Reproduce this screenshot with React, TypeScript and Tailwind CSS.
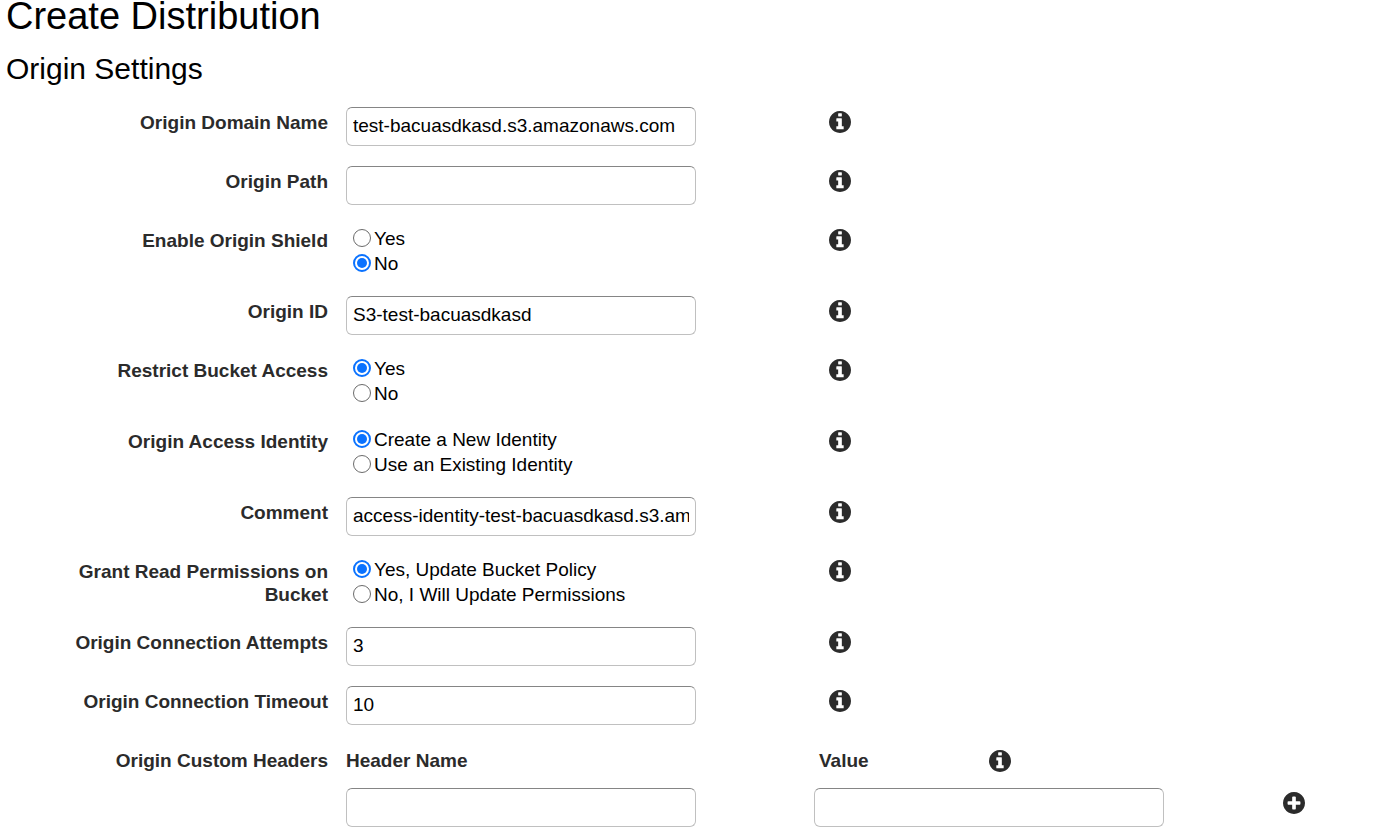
import { useId } from "react";
import type { ReactNode } from "react";

type TextField = { kind: "text"; label: string; value: string };
type RadioField = { kind: "radio"; label: string; options: string[]; selected: number };
type Field = TextField | RadioField;

const fields: Field[] = [
  { kind: "text", label: "Origin Domain Name", value: "test-bacuasdkasd.s3.amazonaws.com" },
  { kind: "text", label: "Origin Path", value: "" },
  { kind: "radio", label: "Enable Origin Shield", options: ["Yes", "No"], selected: 1 },
  { kind: "text", label: "Origin ID", value: "S3-test-bacuasdkasd" },
  { kind: "radio", label: "Restrict Bucket Access", options: ["Yes", "No"], selected: 0 },
  {
    kind: "radio",
    label: "Origin Access Identity",
    options: ["Create a New Identity", "Use an Existing Identity"],
    selected: 0,
  },
  { kind: "text", label: "Comment", value: "access-identity-test-bacuasdkasd.s3.amazonaws.com" },
  {
    kind: "radio",
    label: "Grant Read Permissions on Bucket",
    options: ["Yes, Update Bucket Policy", "No, I Will Update Permissions"],
    selected: 0,
  },
  { kind: "text", label: "Origin Connection Attempts", value: "3" },
  { kind: "text", label: "Origin Connection Timeout", value: "10" },
];

const inputClass =
  "block h-[39px] w-[350px] max-w-full rounded-md border border-[#c0c0c0] border-t-[#858585] bg-white px-[6px] pb-[2px] text-[19px] text-black outline-none focus:border-[#0a72ff]";
const labelClass = "pt-1 pr-[18px] pl-7 text-right font-bold text-[#2b2b2b]";

function InfoButton({ label }: { label: string }) {
  return (
    <button type="button" aria-label={label} className="block cursor-pointer text-[#2b2b2b]">
      <svg viewBox="128 128 1536 1536" className="size-[22px]" fill="currentColor" aria-hidden="true">
        <path d="M1152 1376v-160q0-14-9-23t-23-9h-96v-512q0-14-9-23t-23-9h-320q-14 0-23 9t-9 23v160q0 14 9 23t23 9h96v320h-96q-14 0-23 9t-9 23v160q0 14 9 23t23 9h448q14 0 23-9t9-23zM1024 480v-160q0-14-9-23t-23-9h-192q-14 0-23 9t-9 23v160q0 14 9 23t23 9h192q14 0 23-9t9-23zM1664 896q0 209-103 385.5t-279.5 279.5-385.5 103-385.5-103-279.5-279.5-103-385.5 103-385.5 279.5-279.5 385.5-103 385.5 103 279.5 279.5 103 385.5z" />
      </svg>
    </button>
  );
}

function AddButton() {
  return (
    <button type="button" aria-label="Add header" className="block cursor-pointer text-[#2b2b2b]">
      <svg viewBox="128 128 1536 1536" className="size-[22px]" fill="currentColor" aria-hidden="true">
        <path d="M1344 960v-128q0-26-19-45t-45-19h-256v-256q0-26-19-45t-45-19h-128q-26 0-45 19t-19 45v256h-256q-26 0-45 19t-19 45v128q0 26 19 45t45 19h256v256q0 26 19 45t45 19h128q26 0 45-19t19-45v-256h256q26 0 45-19t19-45zM1664 896q0 209-103 385.5t-279.5 279.5-385.5 103-385.5-103-279.5-279.5-103-385.5 103-385.5 279.5-279.5 385.5-103 385.5 103 279.5 279.5 103 385.5z" />
      </svg>
    </button>
  );
}

// Label column, control column, help column
function Row({ children }: { children: ReactNode }) {
  return <div className="grid grid-cols-[346fr_468fr_586fr] items-start">{children}</div>;
}

function TextRow({ field }: { field: TextField }) {
  const id = useId();
  return (
    <Row>
      <label htmlFor={id} className={labelClass}>{field.label}</label>
      <input id={id} type="text" defaultValue={field.value} className={inputClass} />
      <div className="pt-1 pl-[15px]">
        <InfoButton label={`About ${field.label}`} />
      </div>
    </Row>
  );
}

function RadioRow({ field }: { field: RadioField }) {
  const id = useId();
  return (
    <Row>
      <div id={id} className={labelClass}>{field.label}</div>
      <div role="radiogroup" aria-labelledby={id} className="pt-px pl-[7px] leading-[25px] text-black">
        {field.options.map((option, index) => (
          <label key={option} className="flex w-fit items-center gap-[3px]">
            <input
              type="radio"
              name={id}
              defaultChecked={index === field.selected}
              className="mb-[2px] size-[18px] shrink-0 appearance-none rounded-full border border-[#6b6b6b] bg-white bg-clip-content p-[2px] checked:border-2 checked:border-[#0a72ff] checked:bg-[#0a72ff]"
            />
            {option}
          </label>
        ))}
      </div>
      <div className="pt-1 pl-[15px]">
        <InfoButton label={`About ${field.label}`} />
      </div>
    </Row>
  );
}

function CustomHeaders() {
  const nameId = useId();
  const valueId = useId();
  return (
    <div className="flex flex-col gap-4">
      <Row>
        <div className={labelClass}>Origin Custom Headers</div>
        <label htmlFor={nameId} className="pt-1 font-bold text-[#2b2b2b]">Header Name</label>
        <div className="flex pt-1 pl-[5px]">
          <label htmlFor={valueId} className="w-[170px] font-bold text-[#2b2b2b]">Value</label>
          <InfoButton label="About Origin Custom Headers" />
        </div>
      </Row>
      <Row>
        <div />
        <input id={nameId} type="text" className={inputClass} />
        <div className="grid grid-cols-[469fr_117fr] items-start">
          <input id={valueId} type="text" className={inputClass} />
          <div className="pt-1">
            <AddButton />
          </div>
        </div>
      </Row>
    </div>
  );
}

export default function App() {
  return (
    <main className="min-h-screen bg-white pb-3 font-['Liberation_Sans',Arial,sans-serif] text-[19px] leading-[23px]">
      <h1 className="pl-[6px] text-[38px] leading-8 text-black">Create Distribution</h1>
      <h2 className="pt-5 pl-[6px] text-[30px] leading-[34px] text-black">Origin Settings</h2>
      <form className="flex flex-col gap-5 pt-[21px]" onSubmit={(e) => e.preventDefault()}>
        {fields.map((field) =>
          field.kind === "text" ? (
            <TextRow key={field.label} field={field} />
          ) : (
            <RadioRow key={field.label} field={field} />
          )
        )}
        <CustomHeaders />
      </form>
    </main>
  );
}
